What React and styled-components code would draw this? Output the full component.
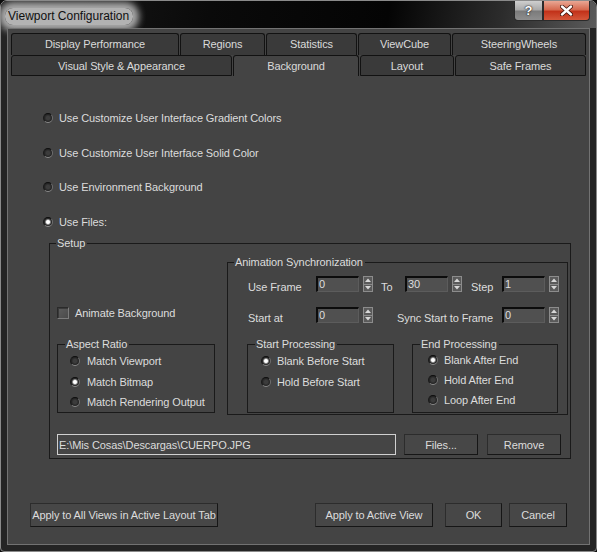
import React from 'react';
import styled, { createGlobalStyle } from 'styled-components';

const Global = createGlobalStyle`
  html, body { margin: 0; padding: 0; background: #0c0c0c; }
  body {
    width: 597px; height: 552px; overflow: hidden;
    font-family: "Liberation Sans", Arial, sans-serif;
  }
  * { box-sizing: border-box; }
`;

const Window = styled.div`
  width: 597px;
  height: 552px;
  border: 1px solid #8a8a8a;
  border-radius: 7px 7px 4px 4px;
  padding: 0 6px 6px;
  background: #242424;
  display: flex;
  flex-direction: column;
  overflow: hidden;
`;

const TitleBar = styled.div`
  height: 27px;
  margin: 0 -6px;
  padding: 0 6px 0 0;
  display: flex;
  align-items: flex-start;
  justify-content: space-between;
  background: linear-gradient(100deg, #1c1c1c 0%, #0a0a0a 35%, #040404 65%, #2c2c2c 84%, #5a5a5a 100%);
`;

const TitleGlow = styled.span`
  margin: 7px 0 0 4px;
  padding: 1px 4px 1px 3px;
  font-size: 12px;
  line-height: 15px;
  color: #101010;
  background: rgba(196, 196, 196, 0.9);
  border-radius: 8px;
  box-shadow: 0 0 7px 6px rgba(196, 196, 196, 0.85);
`;

const Caption = styled.div`
  display: flex;
`;

const CapButton = styled.div`
  height: 20px;
  width: ${p => p.$w}px;
  display: flex;
  align-items: center;
  justify-content: center;
  border: 1px solid #2b2b2b;
  border-top: none;
  border-radius: ${p => p.$r};
  background: ${p => p.$bg};
  color: #fff;
  font: bold 13px "Liberation Sans", Arial, sans-serif;
  text-shadow: 0 0 2px #222, 0 0 1px #000;
`;

const Client = styled.div`
  flex: 1;
  border: 1px solid #727272;
  background: #444444;
  display: flex;
  flex-direction: column;
`;

const Tabs = styled.div`
  padding: 4px 3px 0;
  display: flex;
  flex-direction: column;
`;

const TabRow = styled.div`
  display: flex;
  gap: 1px;
`;

const Tab = styled.div`
  width: ${p => p.$w}px;
  height: ${p => (p.$top ? 22 : 21)}px;
  border: 1px solid #121212;
  border-bottom: ${p => (p.$top || p.$active ? 'none' : '1px solid #121212')};
  border-radius: 3px 3px 0 0;
  background: ${p => (p.$active ? '#444444' : '#3a3a3a')};
  color: #dadada;
  font-size: 11px;
  letter-spacing: -0.1px;
  display: flex;
  align-items: center;
  justify-content: center;
  padding-bottom: ${p => (p.$top ? 1 : 0)}px;
`;

const Pane = styled.div`
  flex: 1;
  display: flex;
  flex-direction: column;
  padding-top: 35px;
`;

const RadioList = styled.div`
  margin-left: 35px;
  display: grid;
  grid-auto-rows: 14px;
  row-gap: 20.5px;
`;

const OptionRow = styled.label`
  display: flex;
  align-items: center;
  gap: ${p => p.$gap ?? 6}px;
  height: 14px;
`;

const Text = styled.span`
  font-size: 11px;
  letter-spacing: -0.1px;
  color: #dcdcdc;
  white-space: nowrap;
`;

const RadioDot = styled.span`
  width: 10px;
  height: 10px;
  flex: none;
  border-radius: 50%;
  border: 1px solid;
  border-color: #0e0e0e #6e6e6e #8a8a8a #1a1a1a;
  background: ${p =>
    p.$on
      ? 'radial-gradient(circle, #ffffff 0 26%, #bdbdbd 36%, #2a2a2a 58%)'
      : 'radial-gradient(circle, #3c3c3c 0 30%, #262626 62%)'};
`;

const CheckBox = styled.span`
  width: 12px;
  height: 12px;
  flex: none;
  border: 1px solid;
  border-color: #2a2a2a #7c7c7c #7c7c7c #2a2a2a;
  background: linear-gradient(135deg, #5e5e5e, #4a4a4a);
  box-shadow: inset 1px 1px 0 #3a3a3a;
`;

const Group = styled.div`
  position: relative;
  border: 1px solid #1a1a1a;
`;

const GroupTitle = styled.span`
  position: absolute;
  top: -7px;
  left: ${p => p.$left ?? 6}px;
  padding: 0 2px 0 1px;
  background: #444444;
  font-size: 11px;
  letter-spacing: -0.1px;
  line-height: 13px;
  color: #dcdcdc;
  white-space: nowrap;
`;

const Setup = styled(Group)`
  margin: 14.5px 0 0 41px;
  width: 522px;
  padding: 18px 2px 3px 7px;
`;

const SetupGrid = styled.div`
  display: grid;
  grid-template-columns: 158px 341px;
  column-gap: 12px;
  align-items: start;
`;

const LeftCol = styled.div`
  display: flex;
  flex-direction: column;
`;

const CheckRow = styled.label`
  margin-top: 45px;
  height: 12px;
  display: flex;
  align-items: center;
  gap: 6px;
`;

const AspectBox = styled(Group)`
  margin-top: 25px;
  height: 69px;
  padding: 9px 0 0 12px;
  display: grid;
  grid-auto-rows: 14px;
  row-gap: 6.5px;
`;

const AnimBox = styled(Group)`
  padding: 13px 0 1px 19px;
`;

const FieldRow = styled.div`
  display: flex;
  align-items: center;
  height: 16px;
  padding-left: 1px;
  margin-top: ${p => p.$mt ?? 0}px;
`;

const FieldLabel = styled.span`
  width: ${p => p.$w}px;
  padding-left: ${p => p.$pl ?? 0}px;
  margin-top: 6px;
  font-size: 11px;
  letter-spacing: -0.1px;
  color: #dcdcdc;
  white-space: nowrap;
`;

const SpinWrap = styled.div`
  display: flex;
  gap: 4px;
  height: 16px;
`;

const SpinField = styled.div`
  width: 43px;
  height: 16px;
  border-style: solid;
  border-width: 2px 1px 1px 2px;
  border-color: #0c0c0c #5c5c5c #5c5c5c #0c0c0c;
  background: #505050;
  color: #dedede;
  font-size: 11px;
  line-height: 12px;
  padding-left: 1px;
`;

const SpinArrows = styled.div`
  width: 10px;
  height: 16px;
  border: 1px solid #8c8c8c;
  background: #5a5a5a;
  display: flex;
  flex-direction: column;
`;

const SpinHalf = styled.div`
  flex: 1;
  display: flex;
  align-items: center;
  justify-content: center;
  & + & { border-top: 1px solid #8c8c8c; }
`;

const ProcRow = styled.div`
  display: flex;
  gap: 18px;
  margin-top: 21px;
`;

const ProcBox = styled(Group)`
  width: ${p => p.$w}px;
  height: 69px;
  padding: ${p => p.$pt}px 0 0 ${p => p.$pl}px;
  display: grid;
  grid-auto-rows: 14px;
  row-gap: ${p => p.$gap}px;
`;

const FileRow = styled.div`
  margin-top: 19px;
  height: 21px;
  display: flex;
  align-items: stretch;
`;

const PathField = styled.div`
  width: 339px;
  border: 1px solid #d0d0d0;
  background: #454545;
  color: #dcdcdc;
  font-size: 11px;
  letter-spacing: -0.1px;
  display: flex;
  align-items: center;
  padding-left: 1px;
`;

const Button = styled.div`
  width: ${p => p.$w}px;
  height: ${p => p.$h ?? 21}px;
  margin-left: ${p => p.$ml ?? 0};
  border: 1px solid;
  border-color: #2c2c2c #161616 #161616 #2c2c2c;
  background: #474747;
  color: #dcdcdc;
  font-size: 11px;
  letter-spacing: -0.1px;
  display: flex;
  align-items: center;
  justify-content: center;
  white-space: nowrap;
`;

const ButtonRow = styled.div`
  margin-top: 44px;
  padding: 0 22px;
  display: flex;
`;

const Arrow = ({ up }) => (
  <svg width="6" height="4" viewBox="0 0 6 4">
    <polygon points={up ? '0,4 3,0.5 6,4' : '0,0 3,3.5 6,0'} fill="#d8d8d8" />
  </svg>
);

const Spinner = ({ value }) => (
  <SpinWrap>
    <SpinField>{value}</SpinField>
    <SpinArrows>
      <SpinHalf><Arrow up /></SpinHalf>
      <SpinHalf><Arrow /></SpinHalf>
    </SpinArrows>
  </SpinWrap>
);

const Option = ({ on, children, gap }) => (
  <OptionRow $gap={gap}>
    <RadioDot $on={on} />
    <Text>{children}</Text>
  </OptionRow>
);

const row1 = [
  ['Display Performance', 168],
  ['Regions', 85],
  ['Statistics', 91],
  ['ViewCube', 93],
  ['SteeringWheels', 134],
];
const row2 = [
  ['Visual Style & Appearance', 221],
  ['Background', 126, true],
  ['Layout', 94],
  ['Safe Frames', 131],
];

export default function App() {
  return (
    <>
      <Global />
      <Window>
        <TitleBar>
          <TitleGlow>Viewport Configuration</TitleGlow>
          <Caption>
            <CapButton
              $w={29}
              $r="0 0 0 4px"
              $bg="linear-gradient(#cfcfcf, #a8a8a8 48%, #7a7a7a 52%, #8e8e8e)"
            >
              ?
            </CapButton>
            <CapButton
              $w={47}
              $r="0 0 4px 0"
              $bg="linear-gradient(#e9a794, #d66a50 45%, #c2321a 55%, #d4573a)"
            >
              <svg width="13" height="11" viewBox="0 0 13 11">
                <path d="M2 1.5 L11 9.5 M11 1.5 L2 9.5" stroke="#3a1008" strokeWidth="4" strokeLinecap="round" />
                <path d="M2 1.5 L11 9.5 M11 1.5 L2 9.5" stroke="#ffffff" strokeWidth="2.4" strokeLinecap="round" />
              </svg>
            </CapButton>
          </Caption>
        </TitleBar>
        <Client>
          <Tabs>
            <TabRow>
              {row1.map(([t, w]) => (
                <Tab key={t} $w={w} $top>{t}</Tab>
              ))}
            </TabRow>
            <TabRow>
              {row2.map(([t, w, a]) => (
                <Tab key={t} $w={w} $active={a}>{t}</Tab>
              ))}
            </TabRow>
          </Tabs>
          <Pane>
            <RadioList>
              <Option>Use Customize User Interface Gradient Colors</Option>
              <Option>Use Customize User Interface Solid Color</Option>
              <Option>Use Environment Background</Option>
              <Option on>Use Files:</Option>
            </RadioList>
            <Setup>
              <GroupTitle $left={6}>Setup</GroupTitle>
              <SetupGrid>
                <LeftCol>
                  <CheckRow>
                    <CheckBox />
                    <Text>Animate Background</Text>
                  </CheckRow>
                  <AspectBox>
                    <GroupTitle $left={7}>Aspect Ratio</GroupTitle>
                    <Option gap={7}>Match Viewport</Option>
                    <Option on gap={7}>Match Bitmap</Option>
                    <Option gap={7}>Match Rendering Output</Option>
                  </AspectBox>
                </LeftCol>
                <AnimBox>
                  <GroupTitle $left={6}>Animation Synchronization</GroupTitle>
                  <FieldRow>
                    <FieldLabel $w={68}>Use Frame</FieldLabel>
                    <Spinner value="0" />
                    <FieldLabel $w={32} $pl={8}>To</FieldLabel>
                    <Spinner value="30" />
                    <FieldLabel $w={40} $pl={9}>Step</FieldLabel>
                    <Spinner value="1" />
                  </FieldRow>
                  <FieldRow $mt={15}>
                    <FieldLabel $w={68}>Start at</FieldLabel>
                    <Spinner value="0" />
                    <FieldLabel $w={129} $pl={24}>Sync Start to Frame</FieldLabel>
                    <Spinner value="0" />
                  </FieldRow>
                  <ProcRow>
                    <ProcBox $w={147} $pt={9} $pl={13} $gap={7}>
                      <GroupTitle $left={7}>Start Processing</GroupTitle>
                      <Option on>Blank Before Start</Option>
                      <Option>Hold Before Start</Option>
                    </ProcBox>
                    <ProcBox $w={146} $pt={8} $pl={15} $gap={6}>
                      <GroupTitle $left={7}>End Processing</GroupTitle>
                      <Option on>Blank After End</Option>
                      <Option>Hold After End</Option>
                      <Option>Loop After End</Option>
                    </ProcBox>
                  </ProcRow>
                </AnimBox>
              </SetupGrid>
              <FileRow>
                <PathField>E:\Mis Cosas\Descargas\CUERPO.JPG</PathField>
                <Button $w={74} $ml="8px">Files...</Button>
                <Button $w={74} $ml="9px">Remove</Button>
              </FileRow>
            </Setup>
            <ButtonRow>
              <Button $w={188} $h={24}>Apply to All Views in Active Layout Tab</Button>
              <Button $w={118} $h={24} $ml="auto">Apply to Active View</Button>
              <Button $w={57} $h={24} $ml="12px">OK</Button>
              <Button $w={58} $h={24} $ml="7px">Cancel</Button>
            </ButtonRow>
          </Pane>
        </Client>
      </Window>
    </>
  );
}
